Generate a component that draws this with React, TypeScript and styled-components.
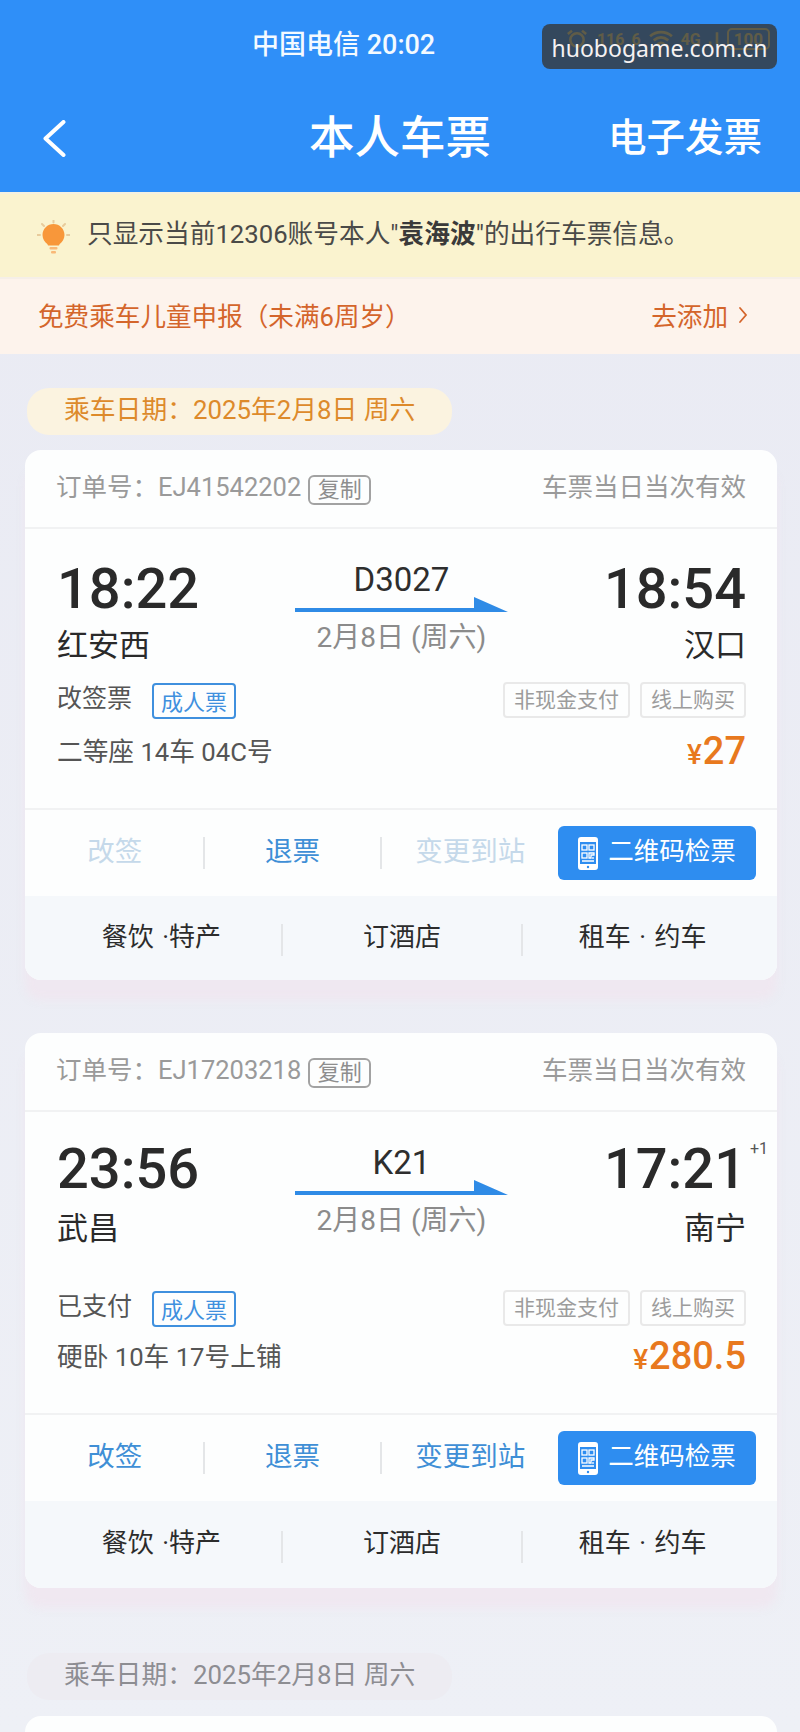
import * as React from "react";
import styled, { createGlobalStyle } from "styled-components";

const FONT = `Roboto, "Noto Sans CJK SC", sans-serif`;

const GlobalStyle = createGlobalStyle`
  html, body {
    margin: 0;
    padding: 0;
    background: #eceef5;
    font-family: ${FONT};
  }
`;

const Page = styled.div`
  position: relative;
  width: 800px;
  height: 1732px;
  overflow: hidden;
  background: linear-gradient(180deg, #e9eaf3 0%, #eef0f6 100%);
`;

const Header = styled.header`
  height: 192px;
  background: #2f8ff8;
  color: #ffffff;
  border-bottom: 2px solid #f3f1e2;
`;

const StatusBar = styled.div`
  height: 90px;
  display: flex;
  align-items: center;
  padding-left: 252px;
  padding-right: 30px;
  justify-content: space-between;
`;

const Carrier = styled.span`
  padding-bottom: 6px;
  font-size: 27px;
  font-weight: 500;
  color: #f4faff;
`;

const StatusIcons = styled.div`
  display: flex;
  align-items: center;
  gap: 7px;
  margin-top: -12px;
  color: #e4e2a0;
  font-size: 16px;
  font-weight: 700;
`;

const Watermark = styled.div`
  position: absolute;
  top: 24px;
  left: 542px;
  width: 235px;
  height: 45px;
  padding-top: 3px;
  box-sizing: border-box;
  display: flex;
  align-items: center;
  justify-content: center;
  border-radius: 8px;
  background: rgba(54, 50, 43, 0.76);
  color: #f6f2f2;
  font-family: "Noto Sans", sans-serif;
  font-size: 23px;
`;

const NavBar = styled.nav`
  height: 96px;
  display: grid;
  grid-template-columns: 1fr auto 1fr;
  align-items: center;
  padding: 0 38px 6px 38px;
`;

const BackButton = styled.div`
  display: flex;
  align-items: center;
  margin-left: 4px;
`;

const NavTitle = styled.h1`
  margin: 0;
  padding-bottom: 8px;
  font-size: 45.5px;
  font-weight: 500;
`;

const NavLink = styled.div`
  padding-bottom: 8px;
  text-align: right;
  font-size: 38.5px;
  font-weight: 500;
`;

const Notice = styled.div`
  height: 83px;
  display: flex;
  align-items: center;
  gap: 17px;
  padding-left: 37px;
  background: #faf3cf;
  color: #4a4a48;
  font-size: 25.7px;
  border-bottom: 2px solid #f5efe8;

  b {
    font-weight: 700;
    color: #3a3a3a;
  }
`;

const NoticeText = styled.span`
  padding-bottom: 9px;
`;

const NoticeBulb = styled.span`
  display: flex;
  margin-top: 2px;
`;

const ChildBar = styled.div`
  height: 75px;
  display: flex;
  align-items: center;
  justify-content: space-between;
  padding: 0 52px 4px 38px;
  box-sizing: border-box;
  background: #fdf3ec;
  color: #d4652b;
  font-size: 25.6px;
`;

const AddLink = styled.span`
  display: flex;
  align-items: center;
  gap: 10px;
`;

const List = styled.div`
  padding: 34px 23px 0 25px;
`;

const DatePill = styled.div<{ $muted?: boolean }>`
  width: 425px;
  height: 47px;
  display: flex;
  align-items: center;
  box-sizing: border-box;
  margin-left: 2px;
  padding: 0 0 9px 37px;
  border-radius: 22px;
  font-size: 25.8px;
  background: ${(props) => (props.$muted ? "#edecf2" : "#fbf3e0")};
  color: ${(props) => (props.$muted ? "#8d8d92" : "#dd8a2b")};
`;

const Card = styled.section<{ $gap: number; $after: number }>`
  margin-top: ${(props) => props.$gap}px;
  margin-bottom: ${(props) => props.$after}px;
  border-radius: 16px;
  background: #fdfefe;
  overflow: hidden;
  box-shadow: 0 20px 8px 0 rgba(240, 230, 240, 0.85);
`;

const OrderRow = styled.div`
  height: 79px;
  display: flex;
  align-items: center;
  justify-content: space-between;
  padding: 0 31px 8px 31px;
  box-sizing: border-box;
  border-bottom: 2px solid #f1f2f3;
  color: #9a9a9a;
  font-size: 25.5px;
`;

const OrderNo = styled.div`
  display: flex;
  align-items: center;
  gap: 7px;
`;

const CopyTag = styled.span`
  display: flex;
  align-items: center;
  justify-content: center;
  width: 63px;
  height: 30px;
  margin-top: 10px;
  padding-bottom: 5px;
  box-sizing: border-box;
  border: 2px solid #a2a2a2;
  border-radius: 6px;
  font-size: 22px;
  color: #8e8e8e;
`;

const TicketBody = styled.div`
  padding: 30px 31px 41px 32px;
`;

const Route = styled.div`
  display: grid;
  grid-template-columns: 1fr 213px 1fr;
`;

const Stop = styled.div<{ $end?: boolean }>`
  display: flex;
  flex-direction: column;
  align-items: ${(props) => (props.$end ? "flex-end" : "flex-start")};
`;

const Time = styled.div<{ $lift: number }>`
  position: relative;
  height: 60px;
  margin-top: ${(props) => -props.$lift}px;
  margin-bottom: ${(props) => props.$lift}px;
  line-height: 60px;
  font-size: 56px;
  font-weight: 500;
  color: #2a2a2a;
`;

const DayOffset = styled.sup`
  position: absolute;
  top: 0;
  left: 100%;
  margin-left: 4px;
  line-height: 20px;
  font-size: 16px;
  font-weight: 400;
  color: #555555;
`;

const Station = styled.div`
  margin-top: 5px;
  height: 44px;
  line-height: 44px;
  font-size: 31px;
  color: #2a2a2a;
`;

const Middle = styled.div`
  display: flex;
  flex-direction: column;
  align-items: center;
`;

const TrainNo = styled.div`
  height: 38px;
  line-height: 42px;
  font-size: 33px;
  color: #2e2e2e;
`;

const TrainDate = styled.div`
  margin-top: 6px;
  height: 36px;
  line-height: 36px;
  font-size: 28px;
  color: #8b8b8b;
`;

const InfoRow = styled.div<{ $top: number }>`
  margin-top: ${(props) => props.$top}px;
  height: 36px;
  display: flex;
  align-items: center;
  justify-content: space-between;
`;

const Status = styled.div`
  display: flex;
  align-items: center;
  gap: 20px;
  font-size: 25px;
  color: #555555;
`;

const FareTag = styled.span`
  display: flex;
  align-items: center;
  justify-content: center;
  width: 84px;
  height: 36px;
  margin-top: 10px;
  padding-bottom: 3px;
  box-sizing: border-box;
  border: 2px solid #3f90de;
  border-radius: 4px;
  font-size: 22px;
  color: #3f90de;
`;

const PayTags = styled.div`
  display: flex;
  gap: 10px;
  margin-top: 8px;
`;

const PayTag = styled.span`
  height: 36px;
  display: flex;
  align-items: center;
  padding: 0 9px 4px;
  border: 2px solid #e9e9e9;
  border-radius: 4px;
  box-sizing: border-box;
  font-size: 21px;
  color: #9c9c9c;
`;

const SeatRow = styled.div<{ $top: number }>`
  margin-top: ${(props) => props.$top}px;
  height: 36px;
  display: flex;
  align-items: center;
  justify-content: space-between;
  font-size: 25.7px;
  color: #555555;
`;

const Price = styled.div`
  display: flex;
  align-items: baseline;
  margin-top: 3px;
  color: #e8791e;
  font-size: 38px;
  font-weight: 500;

  small {
    margin-right: 1px;
    font-size: 28px;
  }
`;

const Actions = styled.div`
  height: 88px;
  display: flex;
  align-items: center;
  padding: 0 21px 0 2px;
  border-top: 2px solid #f1f2f3;
  box-sizing: border-box;
`;

const Action = styled.div<{ $off?: boolean }>`
  flex: 1;
  padding-bottom: 8px;
  text-align: center;
  font-size: 27.5px;
  color: ${(props) => (props.$off ? "#c5d9ea" : "#3f8fd6")};
`;

const Sep = styled.i`
  display: block;
  flex: none;
  width: 2px;
  height: 32px;
  background: #e4e6e8;
`;

const ServiceSep = styled(Sep)`
  margin-top: 4px;
`;

const QrButton = styled.div`
  flex: none;
  width: 198px;
  height: 54px;
  display: flex;
  align-items: center;
  justify-content: center;
  gap: 10px;
  border-radius: 6px;
  background: #2e8df0;
  color: #ffffff;
  font-size: 25.5px;
`;

const QrLabel = styled.span`
  padding-bottom: 10px;
`;

const Services = styled.div<{ $height: number }>`
  height: ${(props) => props.$height}px;
  display: flex;
  align-items: center;
  padding: 0 15px 0 17px;
  background: #f5f8fb;
  box-sizing: border-box;
`;

const Service = styled.div`
  flex: 1;
  padding-bottom: 8px;
  text-align: center;
  font-size: 26px;
  word-spacing: 2px;
  color: #2c2c2c;
`;

const RouteArrow = () => (
  <svg width="213" height="17" viewBox="0 0 213 17">
    <path d="M0 11h179V0l34 15H0z" fill="#2f8be6" />
  </svg>
);

const BackIcon = () => (
  <svg width="24" height="37" viewBox="0 0 24 37">
    <path
      d="M21.500 2 3.500 18.500l18 16.500"
      fill="none"
      stroke="#ffffff"
      strokeWidth="4"
      strokeLinecap="round"
      strokeLinejoin="round"
    />
  </svg>
);

const BulbIcon = () => (
  <svg width="33" height="34" viewBox="0 0 33 34">
    <g stroke="#e8cb9c" strokeWidth="2" strokeLinecap="round">
      <path d="M16.500 0v2.500M5 4l2 2M28 4l-2 2M0.500 15H3M30 15h2.500" />
    </g>
    <path
      d="M16.500 4c6 0 11 4.800 11 11 0 4-2.300 6.800-4.500 8.800-.7.600-1 1.200-1 1.700H11c0-.5-.3-1.100-1-1.700C7.800 21.800 5.500 19 5.500 15c0-6.200 5-11 11-11z"
      fill="#f8973a"
    />
    <rect x="12.500" y="27" width="8" height="2.500" rx="1" fill="#f9b877" />
    <rect x="14" y="31" width="5" height="2.500" rx="1" fill="#f9b877" />
  </svg>
);

const SmallChevron = () => (
  <svg width="10" height="18" viewBox="0 0 10 18">
    <path d="M2 2l6 7-6 7" fill="none" stroke="#d4652b" strokeWidth="1.800" strokeLinecap="round" />
  </svg>
);

const PhoneQrIcon = () => (
  <svg width="20" height="33" viewBox="0 0 20 33">
    <path
      fillRule="evenodd"
      d="M3 0h14a3 3 0 0 1 3 3v27a3 3 0 0 1-3 3H3a3 3 0 0 1-3-3V3a3 3 0 0 1 3-3zM2 5v22h16V5z"
      fill="#ffffff"
    />
    <g fill="none" stroke="#ffffff" strokeWidth="1.300">
      <rect x="4" y="8" width="5" height="5" />
      <rect x="11" y="8" width="5" height="5" />
      <rect x="4" y="16" width="5" height="5" />
      <path d="M11 16h5v2h-3v3h-2zM15 20v2M4 24h12" />
    </g>
    <circle cx="10" cy="30" r="1.200" fill="#2e8df0" />
  </svg>
);

const AlarmIcon = () => (
  <svg width="26" height="20" viewBox="0 0 26 24">
    <circle cx="13" cy="13" r="8" fill="none" stroke="currentColor" strokeWidth="3" />
    <path d="M2 6l5-4M24 6l-5-4" stroke="currentColor" strokeWidth="3" />
  </svg>
);

const WifiIcon = () => (
  <svg width="26" height="20" viewBox="0 0 28 22">
    <path
      d="M2 8c7-6 17-6 24 0M6 12.500c5-4 11-4 16 0M10 17c2.500-2 5.500-2 8 0"
      fill="none"
      stroke="currentColor"
      strokeWidth="3"
    />
  </svg>
);

const SignalIcon = () => (
  <svg width="12" height="20" viewBox="0 0 14 20">
    <path d="M1 13h3v7H1zM9 2h3v18H9z" fill="currentColor" />
  </svg>
);

const BatteryLabel = styled.span`
  padding: 0 5px;
  border: 2px solid currentColor;
  border-radius: 5px;
  font-size: 17px;
  line-height: 18px;
`;

type Ticket = {
  orderNo: string;
  depart: string;
  arrive: string;
  dayOffset?: string;
  timeLift: number;
  from: string;
  to: string;
  train: string;
  status: string;
  statusTop: number;
  seat: string;
  seatTop: number;
  price: string;
  locked: boolean;
  servicesHeight: number;
};

const tickets: Ticket[] = [
  {
    orderNo: "EJ41542202",
    depart: "18:22",
    arrive: "18:54",
    timeLift: 0,
    from: "红安西",
    to: "汉口",
    train: "D3027",
    status: "改签票",
    statusTop: 10,
    seat: "二等座 14车 04C号",
    seatTop: 17,
    price: "27",
    locked: true,
    servicesHeight: 84,
  },
  {
    orderNo: "EJ17203218",
    depart: "23:56",
    arrive: "17:21",
    dayOffset: "+1",
    timeLift: 3,
    from: "武昌",
    to: "南宁",
    train: "K21",
    status: "已支付",
    statusTop: 35,
    seat: "硬卧 10车 17号上铺",
    seatTop: 14,
    price: "280.5",
    locked: false,
    servicesHeight: 87,
  },
];

function TicketCard({ ticket }: { ticket: Ticket }): React.ReactElement {
  return (
    <>
      <OrderRow>
        <OrderNo>
          <span>订单号：{ticket.orderNo}</span>
          <CopyTag>复制</CopyTag>
        </OrderNo>
        <span>车票当日当次有效</span>
      </OrderRow>
      <TicketBody>
        <Route>
          <Stop>
            <Time $lift={ticket.timeLift}>{ticket.depart}</Time>
            <Station>{ticket.from}</Station>
          </Stop>
          <Middle>
            <TrainNo>{ticket.train}</TrainNo>
            <RouteArrow />
            <TrainDate>2月8日 (周六)</TrainDate>
          </Middle>
          <Stop $end>
            <Time $lift={ticket.timeLift}>
              {ticket.arrive}
              {ticket.dayOffset && <DayOffset>{ticket.dayOffset}</DayOffset>}
            </Time>
            <Station>{ticket.to}</Station>
          </Stop>
        </Route>
        <InfoRow $top={ticket.statusTop}>
          <Status>
            <span>{ticket.status}</span>
            <FareTag>成人票</FareTag>
          </Status>
          <PayTags>
            <PayTag>非现金支付</PayTag>
            <PayTag>线上购买</PayTag>
          </PayTags>
        </InfoRow>
        <SeatRow $top={ticket.seatTop}>
          <span>{ticket.seat}</span>
          <Price>
            <small>¥</small>
            {ticket.price}
          </Price>
        </SeatRow>
      </TicketBody>
      <Actions>
        <Action $off={ticket.locked}>改签</Action>
        <Sep />
        <Action>退票</Action>
        <Sep />
        <Action $off={ticket.locked}>变更到站</Action>
        <QrButton>
          <PhoneQrIcon />
          <QrLabel>二维码检票</QrLabel>
        </QrButton>
      </Actions>
      <Services $height={ticket.servicesHeight}>
        <Service>餐饮 ·特产</Service>
        <ServiceSep />
        <Service>订酒店</Service>
        <ServiceSep />
        <Service>租车 · 约车</Service>
      </Services>
    </>
  );
}

export default function App(): React.ReactElement {
  return (
    <Page>
      <GlobalStyle />
      <Header>
        <StatusBar>
          <Carrier>中国电信 20:02</Carrier>
          <StatusIcons>
            <AlarmIcon />
            <span>116</span>
            <span>6</span>
            <WifiIcon />
            <span>4G</span>
            <SignalIcon />
            <BatteryLabel>100</BatteryLabel>
          </StatusIcons>
        </StatusBar>
        <NavBar>
          <BackButton>
            <BackIcon />
          </BackButton>
          <NavTitle>本人车票</NavTitle>
          <NavLink>电子发票</NavLink>
        </NavBar>
      </Header>
      <Watermark>huobogame.com.cn</Watermark>
      <Notice>
        <NoticeBulb>
          <BulbIcon />
        </NoticeBulb>
        <NoticeText>
          只显示当前12306账号本人"<b>袁海波</b>"的出行车票信息。
        </NoticeText>
      </Notice>
      <ChildBar>
        <span>免费乘车儿童申报（未满6周岁）</span>
        <AddLink>
          去添加
          <SmallChevron />
        </AddLink>
      </ChildBar>
      <List>
        <DatePill>乘车日期：2025年2月8日 周六</DatePill>
        <Card $gap={15} $after={53}>
          <TicketCard ticket={tickets[0]} />
        </Card>
        <Card $gap={0} $after={65}>
          <TicketCard ticket={tickets[1]} />
        </Card>
        <DatePill $muted>乘车日期：2025年2月8日 周六</DatePill>
        <Card $gap={16} $after={0}>
          <OrderRow />
        </Card>
      </List>
    </Page>
  );
}
